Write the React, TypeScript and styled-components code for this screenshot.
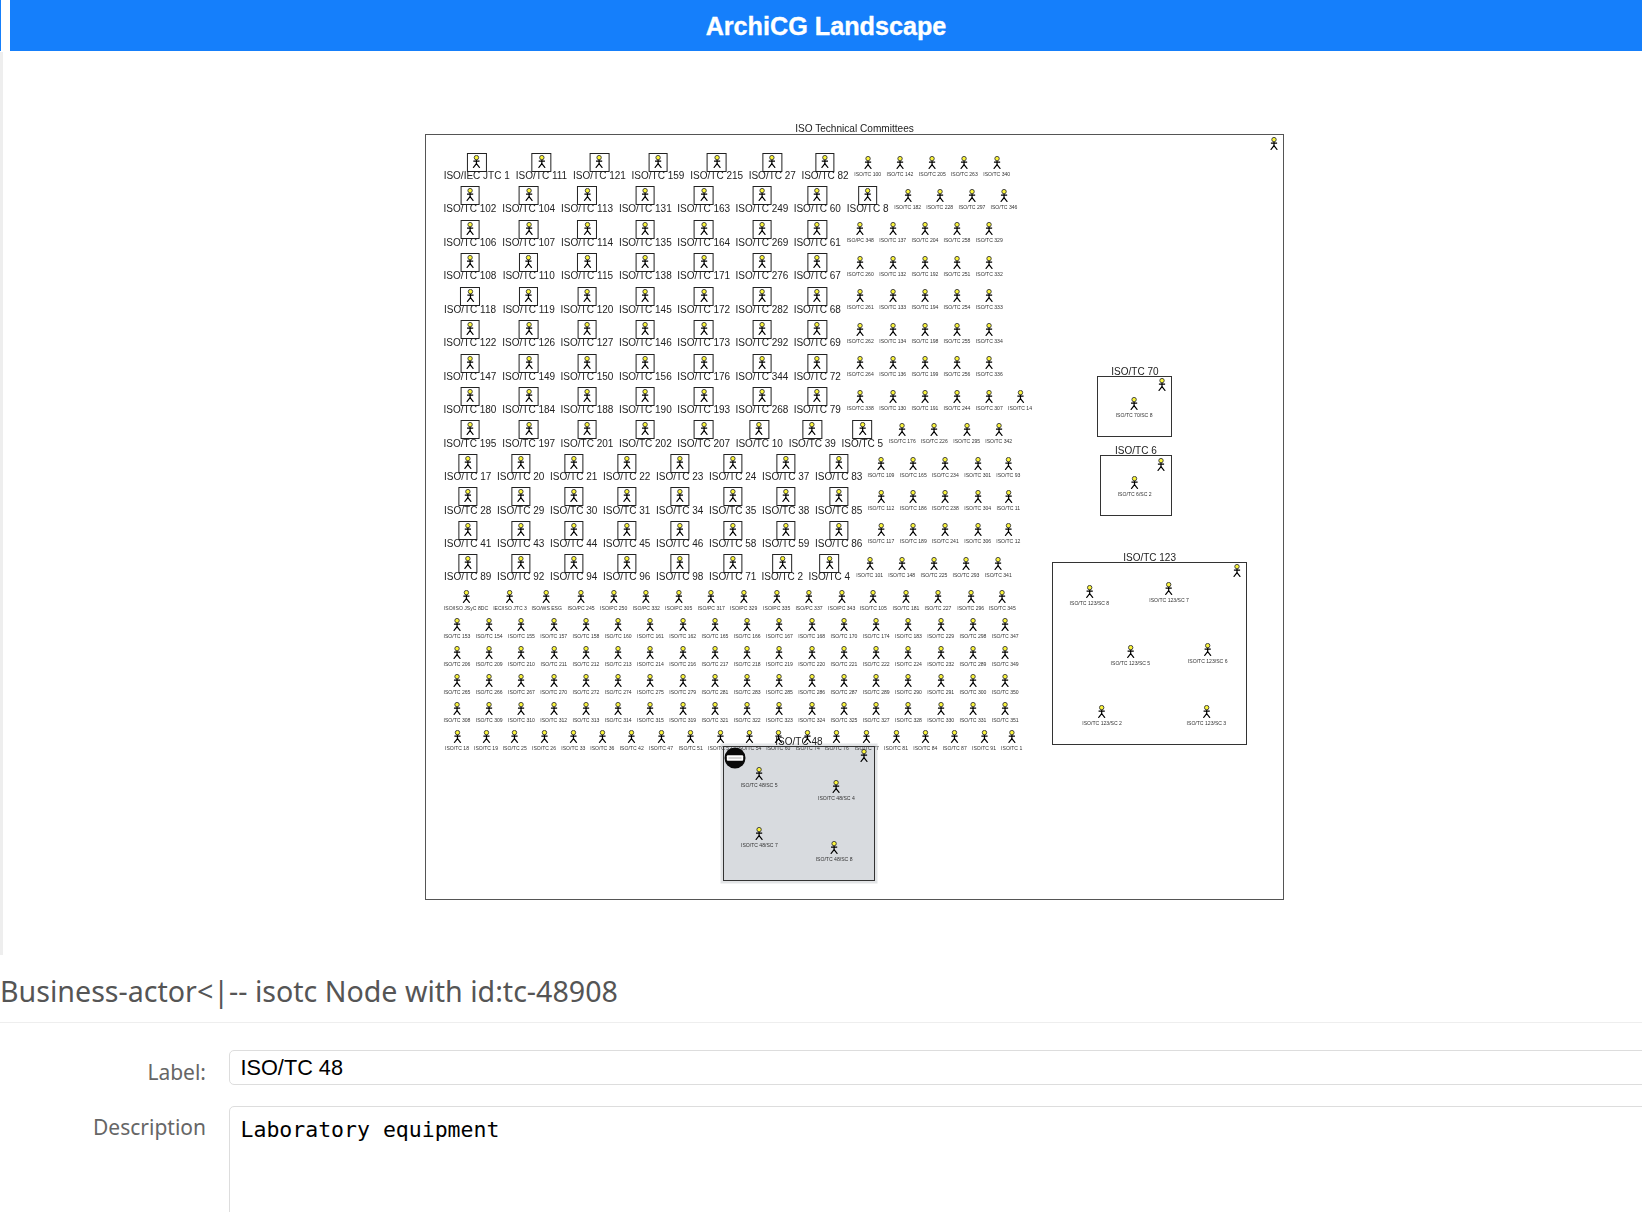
import React from "react";
import styled, { createGlobalStyle } from "styled-components";

const Global = createGlobalStyle`
  html, body { margin: 0; padding: 0; background: #fff; overflow: hidden; }
`;

const Page = styled.div`
  width: 1642px;
  height: 1212px;
  overflow: hidden;
  display: flex;
  flex-direction: column;
  background: #fff;
  font-family: "Noto Sans", "Open Sans", sans-serif;
`;

const TopRow = styled.div`
  display: flex;
  height: 51px;
  flex: none;
`;

const TopEdge = styled.div`
  width: 1px;
  background: #157ffb;
  margin-right: 9px;
`;

const TitleBar = styled.header`
  flex: 1;
  background: #157ffb;
  color: #fff;
  display: flex;
  align-items: center;
  justify-content: center;
  padding-top: 1px;
  box-sizing: border-box;
  font: bold 25.2px "Liberation Sans", Arial, sans-serif;
  -webkit-text-stroke: 0.35px #fff;
`;

const Workspace = styled.div`
  display: flex;
  height: 904px;
  flex: none;
`;

const SideEdge = styled.div`
  width: 3px;
  margin-top: 1px;
  background: #eeeeee;
`;

const Canvas = styled.main`
  flex: 1;
  padding: 83px 0 0 422px;
`;

const Frame = styled.div`
  position: relative;
  box-sizing: border-box;
  width: 859px;
  height: 766px;
  border: 1.5px solid #555;
  filter: blur(0.5px);
  color: #222;
  font-family: "Liberation Sans", Arial, sans-serif;
`;

const FrameTitle = styled.div`
  position: absolute;
  left: 0;
  right: 0;
  top: -12px;
  text-align: center;
  font-size: 10.1px;
  line-height: 12px;
`;

const ActorNode = styled.div`
  position: absolute;
  display: flex;
  flex-direction: column;
  align-items: center;
  transform: translateX(-50%);
  white-space: nowrap;
`;

const SmallLabel = styled.span`
  margin-top: 2px;
  font-size: 5.1px;
  line-height: 6px;
  color: #333;
`;

const ActorBox = styled.div`
  box-sizing: border-box;
  width: 19.5px;
  height: 19px;
  border: 1.6px solid #222;
  background: #fff;
  display: flex;
  justify-content: center;
  padding-top: 1px;
`;

const BoxLabel = styled.span`
  margin-top: -1.8px;
  font-size: 10px;
  line-height: 12px;
`;

const Group = styled.div<{ $selected?: boolean }>`
  position: absolute;
  box-sizing: border-box;
  border: 1.6px solid #333;
  background: ${(p) => (p.$selected ? "#d8dbdf" : "#fff")};
  box-shadow: ${(p) => (p.$selected ? "0 0 0 2.5px rgba(190, 195, 200, 0.45)" : "none")};
`;

const GroupTitle = styled.div`
  position: absolute;
  left: -40px;
  right: -40px;
  top: -11px;
  text-align: center;
  font-size: 10px;
  line-height: 12px;
`;

const StopMark = styled.svg`
  position: absolute;
  z-index: 2;
  display: block;
`;

const Details = styled.section`
  flex: 1;
  display: flex;
  flex-direction: column;
`;

const Heading = styled.h2`
  margin: 0;
  height: 68px;
  box-sizing: border-box;
  padding-top: 17px;
  border-bottom: 1px solid #eee;
  font-size: 28.6px;
  line-height: 38px;
  font-weight: 400;
  color: #555;
  white-space: nowrap;
`;

const TopRule = styled.div`
  height: 1px;
  margin-left: 8px;
  background: #eee;
`;

const Form = styled.form`
  display: grid;
  grid-template-columns: 206px 1700px;
  column-gap: 22.5px;
  row-gap: 20px;
  padding-top: 26.5px;
`;

const FieldLabel = styled.label<{ $offset: number }>`
  text-align: right;
  font-size: 21px;
  line-height: 28px;
  color: #666;
  padding-top: ${(p) => p.$offset}px;
`;

const TextBox = styled.div`
  box-sizing: border-box;
  height: 35.5px;
  border: 1px solid #ddd;
  border-radius: 5px;
  padding: 0 11px;
  font: 21.7px/33px "Liberation Sans", Arial, sans-serif;
  color: #000;
`;

const TextArea = styled.div`
  box-sizing: border-box;
  height: 200px;
  border: 1px solid #ddd;
  border-radius: 5px;
  padding: 9px 11px;
  font: 21.5px/28px "DejaVu Sans Mono", monospace;
  color: #000;
`;

const OX = 426;
const OY = 135.5;

const Figure = () => (
  <svg width="9" height="13" viewBox="0 0 9 13" style={{ display: "block", flex: "none" }}>
    <g fill="none" stroke="#000" strokeWidth="1.2">
      <path d="M4.5 4.5V8.6M1.4 6.2H7.6M4.5 8.6L1.2 12.8M4.5 8.6L7.8 12.8" />
      <circle cx="4.5" cy="2.6" r="2.2" fill="#fbf53c" stroke="#333" strokeWidth="0.9" />
    </g>
  </svg>
);

const at = (x: number, y: number) => ({ left: x - OX, top: y - OY });

const Small = ({ x, y, label, ox = OX, oy = OY }: { x: number; y: number; label?: string; ox?: number; oy?: number }) => (
  <ActorNode style={{ left: x - ox, top: y - oy }}>
    <Figure />
    {label && <SmallLabel>{label}</SmallLabel>}
  </ActorNode>
);

const Boxed = ({ x, y, label }: { x: number; y: number; label: string }) => (
  <ActorNode style={at(x, y)}>
    <ActorBox>
      <Figure />
    </ActorBox>
    <BoxLabel>{label}</BoxLabel>
  </ActorNode>
);

const tc = (n: number | string) => `ISO/TC ${n}`;
const STEP = 33.45;
const boxTop = (i: number) => 153.3 + STEP * i;
const smallTop = (i: number) => 156 + STEP * i;

const C8 = [470, 528.7, 587, 645.3, 703.7, 762, 817.3];
const C10 = [467.7, 520.7, 573.7, 626.7, 679.7, 732.7, 785.7, 838.7];

const bigRows: [string, number][][] = [
  [["ISO/IEC JTC 1", 476.7], [tc(111), 541.5], [tc(121), 599.5], [tc(159), 658], [tc(215), 716.7], [tc(27), 772.3], [tc(82), 825]],
  [...[102, 104, 113, 131, 163, 249, 60].map((n, i): [string, number] => [tc(n), C8[i]]), [tc(8), 867.7]],
  [106, 107, 114, 135, 164, 269, 61].map((n, i): [string, number] => [tc(n), C8[i]]),
  [108, 110, 115, 138, 171, 276, 67].map((n, i): [string, number] => [tc(n), C8[i]]),
  [118, 119, 120, 145, 172, 282, 68].map((n, i): [string, number] => [tc(n), C8[i]]),
  [122, 126, 127, 146, 173, 292, 69].map((n, i): [string, number] => [tc(n), C8[i]]),
  [147, 149, 150, 156, 176, 344, 72].map((n, i): [string, number] => [tc(n), C8[i]]),
  [180, 184, 188, 190, 193, 268, 79].map((n, i): [string, number] => [tc(n), C8[i]]),
  [[tc(195), 470], [tc(197), 528.7], [tc(201), 587], [tc(202), 645.3], [tc(207), 703.7], [tc(10), 759.3], [tc(39), 812.3], [tc(5), 862.3]],
  [17, 20, 21, 22, 23, 24, 37, 83].map((n, i): [string, number] => [tc(n), C10[i]]),
  [28, 29, 30, 31, 34, 35, 38, 85].map((n, i): [string, number] => [tc(n), C10[i]]),
  [41, 43, 44, 45, 46, 58, 59, 86].map((n, i): [string, number] => [tc(n), C10[i]]),
  [[tc(89), C10[0]], [tc(92), C10[1]], [tc(94), C10[2]], [tc(96), C10[3]], [tc(98), C10[4]], [tc(71), C10[5]], [tc(2), 782.3], [tc(4), 829.3]],
];

const pair = (labels: (number | string)[], xs: number[]): [string, number][] =>
  labels.map((n, i) => [typeof n === "number" ? tc(n) : n, xs[i]]);

const S1 = [867.7, 900, 932.3, 964.3, 996.7];
const S2 = [907.7, 939.7, 972, 1004];
const S3 = [860.3, 892.7, 925, 957, 989.3, 1020];
const S9 = [902.3, 934.3, 966.7, 998.7];
const S10 = [881, 913.3, 945.3, 977.7, 1008.3];
const S13 = [869.7, 901.7, 934, 966, 998.3];

const sideRows: [string, number][][] = [
  pair([100, 142, 205, 263, 340], S1),
  pair([182, 228, 297, 346], S2),
  pair(["ISO/PC 348", 137, 204, 258, 329], S3),
  pair([260, 132, 192, 251, 332], S3),
  pair([261, 133, 194, 254, 333], S3),
  pair([262, 134, 198, 255, 334], S3),
  pair([264, 136, 199, 256, 336], S3),
  pair([338, 130, 191, 244, 307, 14], S3),
  pair([176, 226, 295, 342], S9),
  pair([109, 165, 234, 301, 93], S10),
  pair([112, 186, 238, 304, 11], S10),
  pair([117, 189, 241, 306, 12], S10),
  pair([101, 148, 225, 293, 341], S13),
];

const gridX = Array.from({ length: 18 }, (_, i) => 457 + 32.25 * i);
const lastX = [457, 486, 514.7, 544, 573.3, 602.3, 631.7, 661, 690.7, 720, 749.3, 778.3, 807.7, 836.7, 866.7, 896, 925.3, 954.7, 984, 1011.7];

const lowerRows: { y: number; items: [string, number][] }[] = [
  {
    y: 590,
    items: pair(
      ["ISO/ISO JSyC 8DC", "IEC/ISO JTC 3", "ISO/WS ESG", "ISO/PC 245", "ISO/PC 250", "ISO/PC 332", "ISO/PC 305", "ISO/PC 317", "ISO/PC 329", "ISO/PC 335", "ISO/PC 337", "ISO/PC 343", 105, 181, 227, 296, 345],
      [466, 510, 546.7, 581, 613.7, 646.3, 678.7, 711.3, 743.7, 776.7, 809, 841.7, 873.3, 906, 938, 970.7, 1002.3]
    ),
  },
  { y: 618, items: pair([153, 154, 155, 157, 158, 160, 161, 162, 165, 166, 167, 168, 170, 174, 183, 229, 298, 347], gridX) },
  { y: 646, items: pair([206, 209, 210, 211, 212, 213, 214, 216, 217, 218, 219, 220, 221, 222, 224, 232, 289, 349], gridX) },
  { y: 674, items: pair([265, 266, 267, 270, 272, 274, 275, 279, 281, 283, 285, 286, 287, 289, 290, 291, 300, 350], gridX) },
  { y: 702, items: pair([308, 309, 310, 312, 313, 314, 315, 319, 321, 322, 323, 324, 325, 327, 328, 330, 331, 351], gridX) },
  { y: 730, items: pair([18, 19, 25, 26, 33, 36, 42, 47, 51, 52, 54, 60, 74, 76, 77, 81, 84, 87, 91, 1], lastX) },
];

type GroupData = {
  title: string;
  l: number;
  t: number;
  r: number;
  b: number;
  corner: [number, number];
  kids: [string, number, number][];
  selected?: boolean;
};

const groups: GroupData[] = [
  { title: "ISO/TC 48", l: 722.7, t: 746.7, r: 875.2, b: 881.8, corner: [865, 750], selected: true,
    kids: [["ISO/TC 48/SC 5", 759.7, 767.7], ["ISO/TC 48/SC 4", 837, 781], ["ISO/TC 48/SC 7", 760, 828.3], ["ISO/TC 48/SC 8", 834.7, 841.7]] },
  { title: "ISO/TC 70", l: 1097.3, t: 376.7, r: 1172.5, b: 437.2, corner: [1162.3, 379], kids: [["ISO/TC 70/SC 8", 1134.7, 397.7]] },
  { title: "ISO/TC 6", l: 1100, t: 455.7, r: 1171.8, b: 516.5, corner: [1162, 458.7], kids: [["ISO/TC 6/SC 2", 1135.3, 476.7]] },
  { title: "ISO/TC 123", l: 1052, t: 562.3, r: 1247.2, b: 745.8, corner: [1237.3, 565],
    kids: [["ISO/TC 123/SC 8", 1090, 585.7], ["ISO/TC 123/SC 7", 1169.7, 583.3], ["ISO/TC 123/SC 5", 1131, 645.7], ["ISO/TC 123/SC 6", 1208.3, 643.7], ["ISO/TC 123/SC 2", 1102.7, 706], ["ISO/TC 123/SC 3", 1207, 706]] },
];

const GroupNode = ({ g }: { g: GroupData }) => {
  const ox = g.l + 1.6;
  const oy = g.t + 1.6;
  return (
    <Group
      $selected={g.selected}
      style={{ left: g.l - OX, top: g.t - OY, width: g.r - g.l, height: g.b - g.t }}
    >
      <GroupTitle>{g.title}</GroupTitle>
      <Small x={g.corner[0]} y={g.corner[1]} ox={ox} oy={oy} />
      {g.kids.map(([label, x, y]) => (
        <Small key={label} x={x} y={y} label={label} ox={ox} oy={oy} />
      ))}
    </Group>
  );
};

export default function App() {
  return (
    <Page>
      <Global />
      <TopRow>
        <TopEdge />
        <TitleBar>ArchiCG Landscape</TitleBar>
      </TopRow>
      <Workspace>
        <SideEdge />
        <Canvas>
          <Frame>
            <FrameTitle>ISO Technical Committees</FrameTitle>
            {groups.map((g) => (
              <GroupNode key={g.title} g={g} />
            ))}
            <Small x={1274} y={137.3} />
            {bigRows.map((row, i) =>
              row.map(([label, x]) => <Boxed key={label} x={x} y={boxTop(i)} label={label} />)
            )}
            {sideRows.map((row, i) =>
              row.map(([label, x]) => <Small key={label} x={x} y={smallTop(i)} label={label} />)
            )}
            {lowerRows.map((row) =>
              row.items.map(([label, x]) => <Small key={label + row.y} x={x} y={row.y} label={label} />)
            )}
            <StopMark width="22" height="22" viewBox="0 0 22 22" style={at(723.5, 747.5)}>
              <circle cx="11" cy="11" r="10.5" fill="#0a0a0a" />
              <rect x="2.8" y="8.2" width="16.4" height="5.6" rx="1" fill="#fff" />
              <rect x="4.5" y="10.4" width="13" height="1.2" fill="#bbb" />
            </StopMark>
          </Frame>
        </Canvas>
      </Workspace>
      <TopRule />
      <Details>
        <Heading>Business-actor&lt;|-- isotc Node with id:tc-48908</Heading>
        <Form>
          <FieldLabel $offset={8}>Label:</FieldLabel>
          <TextBox>ISO/TC 48</TextBox>
          <FieldLabel $offset={7}>Description</FieldLabel>
          <TextArea>Laboratory equipment</TextArea>
        </Form>
      </Details>
    </Page>
  );
}
